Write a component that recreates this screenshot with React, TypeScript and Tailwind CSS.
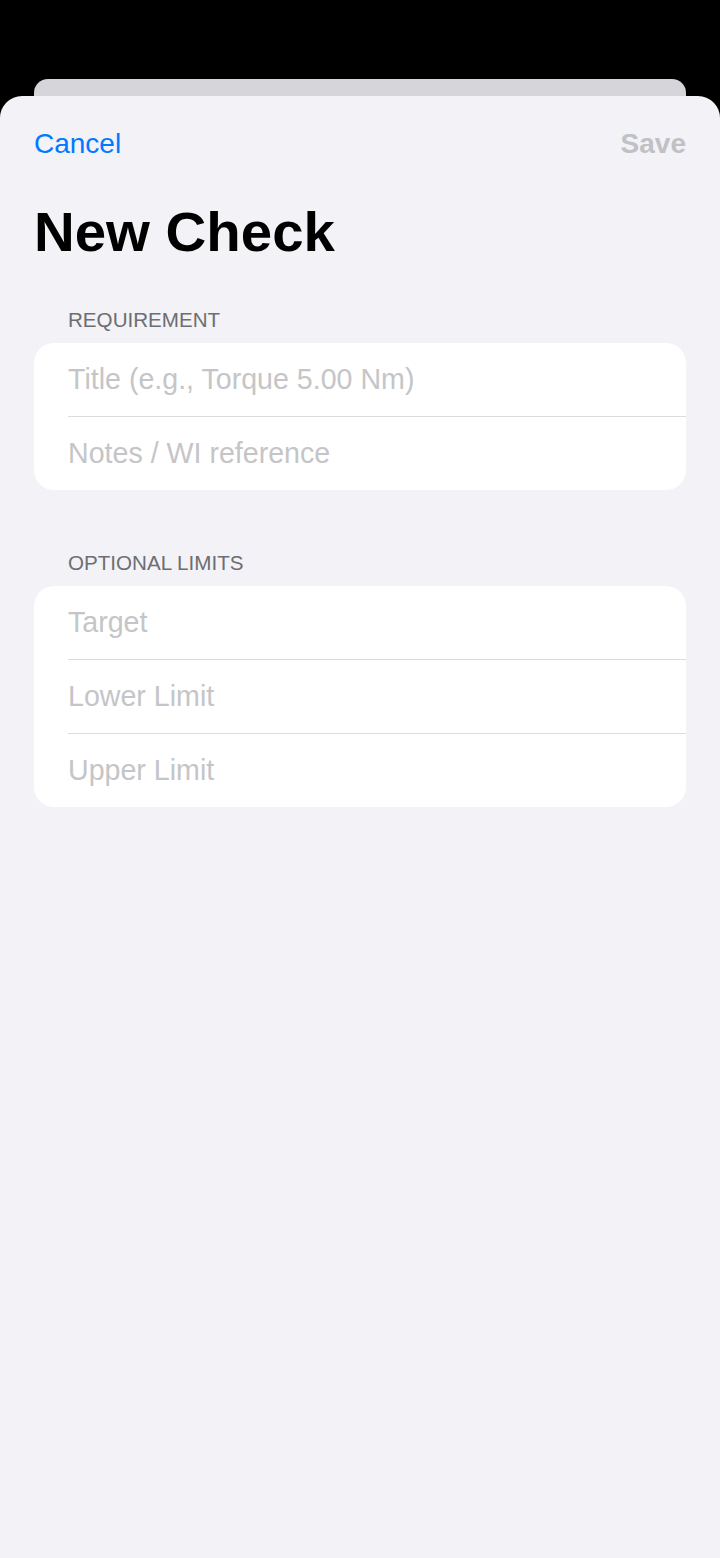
const font = { fontFamily: '"Liberation Sans", Arial, sans-serif' };

function Field({ placeholder, last }: { placeholder: string; last?: boolean }) {
  return (
    <div className="pl-[34px]">
      <div
        className={
          "flex items-center text-[28.6px] text-[#c5c5c7] " +
          (last ? "h-[73px]" : "h-[74px] border-b border-[#dcdcde]")
        }
      >
        {placeholder}
      </div>
    </div>
  );
}

function Section({ title, fields, className }: { title: string; fields: string[]; className?: string }) {
  return (
    <div className={className}>
      <div className="px-[68px] text-[20.6px] leading-[25px] text-[#6d6d72]">{title}</div>
      <div className="mt-[11px] mx-[34px] bg-white rounded-[20px] overflow-hidden">
        {fields.map((f, i) => (
          <Field key={f} placeholder={f} last={i === fields.length - 1} />
        ))}
      </div>
    </div>
  );
}

export default function App() {
  return (
    <div className="min-h-[1558px] bg-black flex flex-col" style={font}>
      {/* stacked sheet behind */}
      <div className="mt-[79px] mx-[34px] h-[17px] bg-[#d6d5da] rounded-t-[14px]" />

      <div className="flex-1 bg-[#f2f2f7] rounded-t-[22px] pt-[31px]">
        <div className="px-[34px] flex justify-between items-center text-[28px] leading-[34px]">
          <span className="text-[#007aff]">Cancel</span>
          <span className="text-[#c0c0c5] font-semibold">Save</span>
        </div>

        <h1 className="mt-[43px] px-[34px] text-[56.4px] leading-[56px] font-bold text-black">New Check</h1>

        <Section
          className="mt-[47px]"
          title="REQUIREMENT"
          fields={["Title (e.g., Torque 5.00 Nm)", "Notes / WI reference"]}
        />
        <Section
          className="mt-[60px]"
          title="OPTIONAL LIMITS"
          fields={["Target", "Lower Limit", "Upper Limit"]}
        />
      </div>
    </div>
  );
}
